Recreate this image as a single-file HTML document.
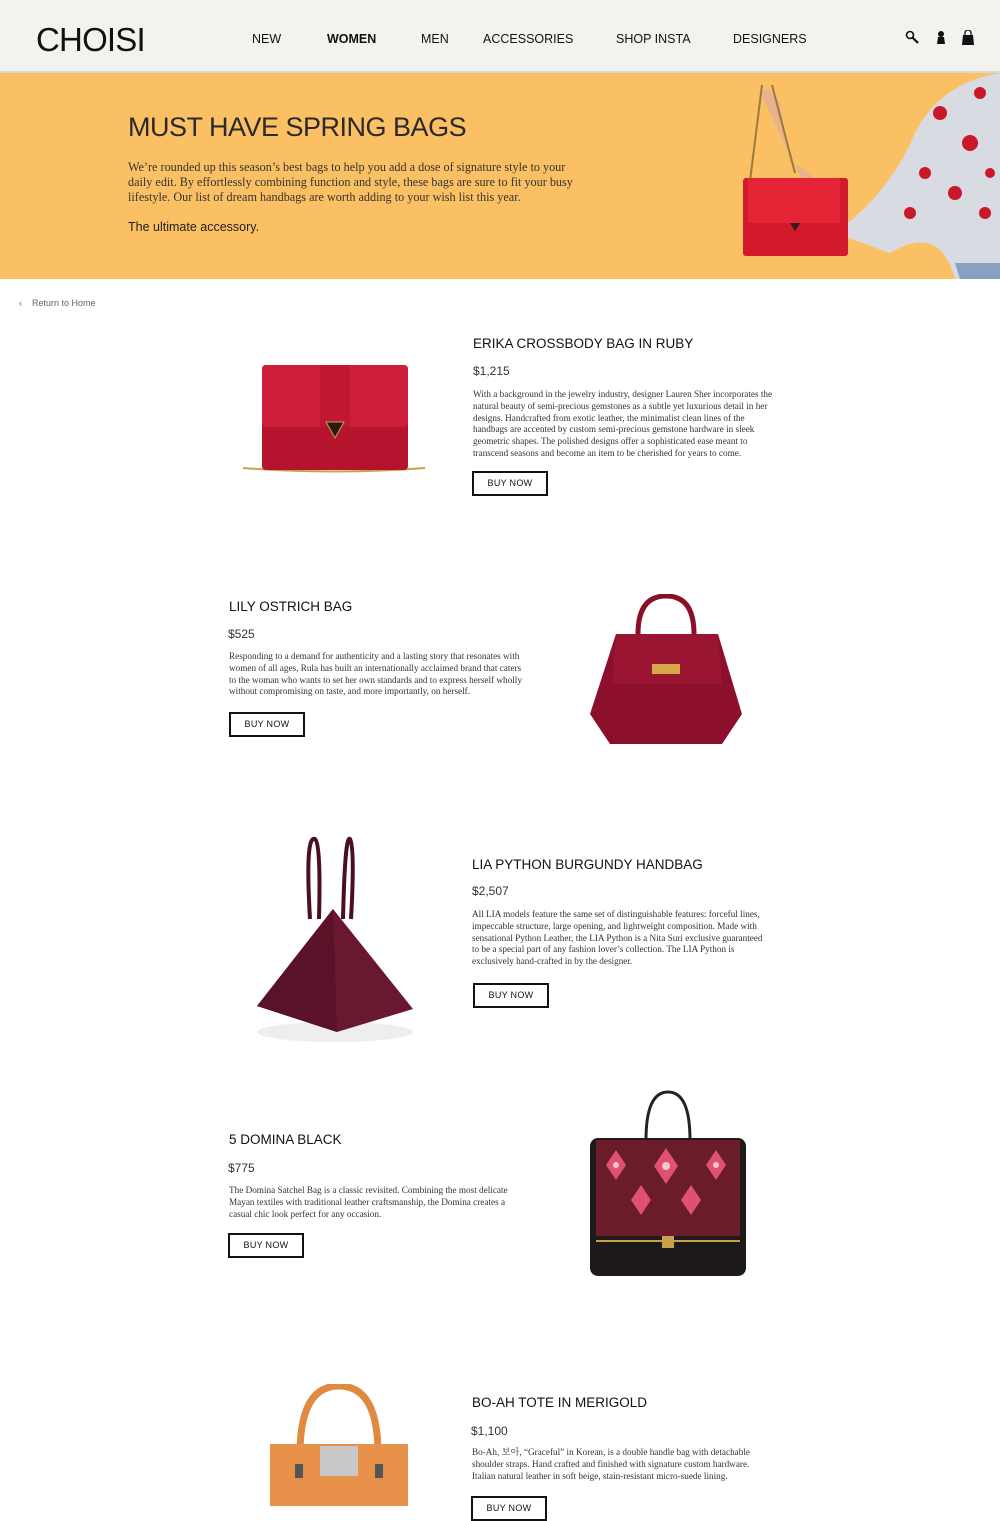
<!DOCTYPE html>
<html><head><meta charset="utf-8"><style>
*{margin:0;padding:0;box-sizing:border-box}
body{width:1000px;height:1506px;position:relative;background:#fff;font-family:"Liberation Sans",sans-serif;color:#111;overflow:hidden}
.a{position:absolute}
header{position:absolute;left:0;top:0;width:1000px;height:73px;background:#f4f2ef;border-bottom:2px solid #d8d8d8}
.logo{left:36px;top:21px;font-size:33px;letter-spacing:-0.8px}
.nav{top:32px;font-size:12.5px}
.banner{left:0;top:73px;width:1000px;height:206px;background:#fbc063}
h1{position:absolute;left:128px;top:112px;font-weight:normal;font-size:27px;color:#2a2a2a;letter-spacing:-0.5px}
.bt{left:128px;top:160px;width:445px;font-family:"Liberation Serif",serif;font-size:12.2px;line-height:15px;color:#333}
.title{font-size:13.5px;letter-spacing:0}
.price{font-size:12px;color:#333}
.desc{font-family:"Liberation Serif",serif;font-size:9.2px;line-height:11.8px;color:#333}
.btn{width:76px;height:25px;border:2.5px solid #111;font-size:9px;text-align:center;line-height:20px;letter-spacing:0.3px}
</style></head><body>
<header></header>
<div class="a logo">CHOISI</div>
<div class="a nav" style="left:252px">NEW</div>
<div class="a nav" style="left:327px;font-weight:bold">WOMEN</div>
<div class="a nav" style="left:421px">MEN</div>
<div class="a nav" style="left:483px">ACCESSORIES</div>
<div class="a nav" style="left:616px">SHOP INSTA</div>
<div class="a nav" style="left:733px">DESIGNERS</div>
<svg class="a" style="left:905px;top:30px" width="70" height="16" viewBox="0 0 70 16">
<circle cx="5" cy="5" r="3.5" fill="none" stroke="#111" stroke-width="1.6"/><path d="M7.5 7.5L13 13" stroke="#111" stroke-width="2.2"/>
<circle cx="36" cy="4" r="3" fill="#111"/><path d="M32 14L33 7H39L40 14Z" fill="#111"/>
<path d="M58 5H68L69 15H57Z" fill="#111"/><path d="M60 6V3a3 3 0 0 1 6 0V6" fill="none" stroke="#111" stroke-width="1.3"/>
</svg>
<div class="a banner"></div>
<h1>MUST HAVE SPRING BAGS</h1>
<div class="a bt">We’re rounded up this season’s best bags to help you add a dose of signature style to your daily edit. By effortlessly combining function and style, these bags are sure to fit your busy lifestyle. Our list of dream handbags are worth adding to your wish list this year.</div>
<div class="a" style="left:128px;top:220px;font-size:12.5px;color:#222">The ultimate accessory.</div>
<svg class="a" style="left:740px;top:73px" width="260" height="206" viewBox="0 0 260 206">
<path d="M95 160 Q150 120 175 60 Q200 10 260 0 V206 H215 Q200 150 150 180 Z" fill="#d9dbe3"/>
<g fill="#c8182a"><circle cx="200" cy="40" r="7"/><circle cx="230" cy="70" r="8"/><circle cx="185" cy="100" r="6"/><circle cx="215" cy="120" r="7"/><circle cx="245" cy="140" r="6"/><circle cx="170" cy="140" r="6"/><circle cx="240" cy="20" r="6"/><circle cx="250" cy="100" r="5"/></g>
<path d="M20 20 Q30 10 40 30 L50 90 Q70 95 95 130 L90 145 Q60 110 35 50 Z" fill="#e8b28f"/>
<path d="M22 12 L10 108 M32 12 L55 100" stroke="#9a7b3a" stroke-width="2" fill="none"/>
<rect x="3" y="105" width="105" height="78" rx="3" fill="#d21a2c"/>
<path d="M8 105 H100 V150 H8Z" fill="#e52436"/><path d="M50 150 l5 8 l5 -8Z" fill="#222"/>
<path d="M215 190 H260 V206 H220Z" fill="#8aa0c0"/>
</svg>
<div class="a" style="left:19px;top:298px;font-size:9px;color:#666">‹&nbsp;&nbsp;&nbsp;&nbsp;Return to Home</div>

<svg class="a" style="left:238px;top:360px" width="192" height="115" viewBox="0 0 192 115">
<path d="M5 108 Q95 115 187 108" stroke="#c9a14a" stroke-width="2" fill="none"/>
<rect x="24" y="5" width="146" height="105" rx="4" fill="#b5142e"/>
<rect x="24" y="5" width="146" height="62" rx="4" fill="#cf1d3c"/>
<rect x="82" y="5" width="30" height="62" fill="#c01733"/>
<path d="M88 62 L97 78 L106 62Z" fill="#2a1a10" stroke="#c9a14a"/>
</svg>
<div class="a title" style="left:473px;top:336px">ERIKA CROSSBODY BAG IN RUBY</div>
<div class="a price" style="left:473px;top:364px">$1,215</div>
<div class="a desc" style="left:473px;top:389px;width:300px">With a background in the jewelry industry, designer Lauren Sher incorporates the natural beauty of semi-precious gemstones as a subtle yet luxurious detail in her designs. Handcrafted from exotic leather, the minimalist clean lines of the handbags are accented by custom semi-precious gemstone hardware in sleek geometric shapes. The polished designs offer a sophisticated ease meant to transcend seasons and become an item to be cherished for years to come.</div>
<div class="a btn" style="left:472px;top:471px">BUY NOW</div>

<div class="a title" style="left:229px;top:599px">LILY OSTRICH BAG</div>
<div class="a price" style="left:228px;top:627px">$525</div>
<div class="a desc" style="left:229px;top:651px;width:296px">Responding to a demand for authenticity and a lasting story that resonates with women of all ages, Rula has built an internationally acclaimed brand that caters to the woman who wants to set her own standards and to express herself wholly without compromising on taste, and more importantly, on herself.</div>
<div class="a btn" style="left:229px;top:712px">BUY NOW</div>
<svg class="a" style="left:588px;top:594px" width="158" height="152" viewBox="0 0 158 152">
<path d="M50 40 Q50 2 78 2 Q106 2 106 40" stroke="#8a1028" stroke-width="5" fill="none"/>
<path d="M28 40 H130 L154 120 L134 150 H22 L2 120Z" fill="#8c0f2c"/>
<path d="M28 40 H130 L134 90 H24Z" fill="#9a1532"/>
<rect x="64" y="70" width="28" height="10" fill="#d8a848"/>
</svg>

<svg class="a" style="left:255px;top:834px" width="160" height="210" viewBox="0 0 160 210">
<ellipse cx="80" cy="198" rx="78" ry="10" fill="#eee"/>
<path d="M55 85 Q50 0 60 5 Q66 10 64 85 M88 85 Q90 0 95 5 Q100 15 96 85" stroke="#4a0f20" stroke-width="4" fill="none"/>
<path d="M78 75 L158 175 L82 198 L2 172Z" fill="#6a1830"/>
<path d="M78 75 L82 198 L2 172Z" fill="#5a1228"/>
</svg>
<div class="a title" style="left:472px;top:857px">LIA PYTHON BURGUNDY HANDBAG</div>
<div class="a price" style="left:472px;top:884px">$2,507</div>
<div class="a desc" style="left:472px;top:909px;width:298px">All LIA models feature the same set of distinguishable features: forceful lines, impeccable structure, large opening, and lightweight composition. Made with sensational Python Leather, the LIA Python is a Nita Suri exclusive guaranteed to be a special part of any fashion lover’s collection. The LIA Python is exclusively hand-crafted in by the designer.</div>
<div class="a btn" style="left:473px;top:983px">BUY NOW</div>

<div class="a title" style="left:229px;top:1132px">5 DOMINA BLACK</div>
<div class="a price" style="left:228px;top:1161px">$775</div>
<div class="a desc" style="left:229px;top:1185px;width:290px">The Domina Satchel Bag is a classic revisited. Combining the most delicate Mayan textiles with traditional leather craftsmanship, the Domina creates a casual chic look perfect for any occasion.</div>
<div class="a btn" style="left:228px;top:1233px">BUY NOW</div>
<svg class="a" style="left:586px;top:1090px" width="164" height="190" viewBox="0 0 164 190">
<path d="M60 50 Q60 2 82 2 Q104 2 104 50" stroke="#222" stroke-width="3" fill="none"/>
<rect x="4" y="48" width="156" height="138" rx="8" fill="#1e1a1a"/>
<rect x="10" y="50" width="144" height="96" fill="#6a1c2a"/>
<g fill="#e05070"><path d="M30 60l10 15l-10 15l-10-15z"/><path d="M80 58l12 18l-12 18l-12-18z"/><path d="M130 60l10 15l-10 15l-10-15z"/><path d="M55 95l10 15l-10 15l-10-15z"/><path d="M105 95l10 15l-10 15l-10-15z"/></g>
<g fill="#f0c8d0"><circle cx="80" cy="76" r="4"/><circle cx="30" cy="75" r="3"/><circle cx="130" cy="75" r="3"/></g>
<rect x="10" y="150" width="144" height="2" fill="#c9a14a"/><rect x="76" y="146" width="12" height="12" fill="#c9a14a"/>
</svg>

<svg class="a" style="left:265px;top:1384px" width="148" height="122" viewBox="0 0 148 122">
<path d="M35 70 Q35 2 74 2 Q113 2 113 70" stroke="#e08a40" stroke-width="7" fill="none"/>
<path d="M5 60 H143 V122 H5Z" fill="#e8914a"/>
<rect x="55" y="62" width="38" height="30" fill="#c8c8c8"/>
<rect x="30" y="80" width="8" height="14" fill="#555"/><rect x="110" y="80" width="8" height="14" fill="#555"/>
</svg>
<div class="a title" style="left:472px;top:1395px">BO-AH TOTE IN MERIGOLD</div>
<div class="a price" style="left:471px;top:1424px">$1,100</div>
<div class="a desc" style="left:472px;top:1447px;width:295px;font-family:'Liberation Serif','Noto Serif CJK SC',serif">Bo-Ah, 보아, “Graceful” in Korean, is a double handle bag with detachable shoulder straps. Hand crafted and finished with signature custom hardware. Italian natural leather in soft beige, stain-resistant micro-suede lining.</div>
<div class="a btn" style="left:471px;top:1496px">BUY NOW</div>
</body></html>
